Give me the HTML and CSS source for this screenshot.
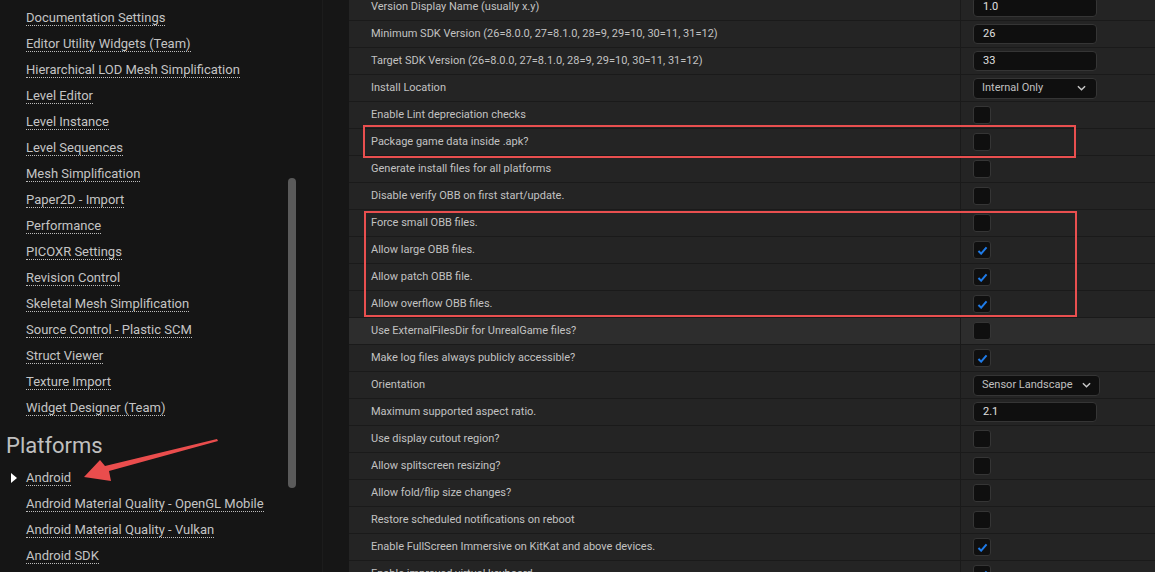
FILE: index.html
```html
<!DOCTYPE html>
<html lang="en">
<head>
    <meta charset="UTF-8">
    <title>Project Settings - Android</title>
    <link rel="stylesheet" href="styles.css">
</head>
<body>

<div class="sidebar">
    <ul class="nav">
        <li><span class="link">Documentation Settings</span></li>
        <li><span class="link">Editor Utility Widgets (Team)</span></li>
        <li><span class="link">Hierarchical LOD Mesh Simplification</span></li>
        <li><span class="link">Level Editor</span></li>
        <li><span class="link">Level Instance</span></li>
        <li><span class="link">Level Sequences</span></li>
        <li><span class="link">Mesh Simplification</span></li>
        <li><span class="link">Paper2D - Import</span></li>
        <li><span class="link">Performance</span></li>
        <li><span class="link">PICOXR Settings</span></li>
        <li><span class="link">Revision Control</span></li>
        <li><span class="link">Skeletal Mesh Simplification</span></li>
        <li><span class="link">Source Control - Plastic SCM</span></li>
        <li><span class="link">Struct Viewer</span></li>
        <li><span class="link">Texture Import</span></li>
        <li><span class="link">Widget Designer (Team)</span></li>
    </ul>
    <h2 class="section">Platforms</h2>
    <ul class="nav">
        <li class="active"><span class="caret"></span><span class="link">Android</span></li>
        <li><span class="link">Android Material Quality - OpenGL Mobile</span></li>
        <li><span class="link">Android Material Quality - Vulkan</span></li>
        <li><span class="link">Android SDK</span></li>
    </ul>
    <div class="scrollbar"></div>
</div>

<div class="gutter"></div>

<div class="panel">
    <div class="row"><div class="label">Version Display Name (usually x.y)</div><div class="value"><span class="field">1.0</span></div></div>
    <div class="row"><div class="label">Minimum SDK Version (26=8.0.0, 27=8.1.0, 28=9, 29=10, 30=11, 31=12)</div><div class="value"><span class="field">26</span></div></div>
    <div class="row"><div class="label">Target SDK Version (26=8.0.0, 27=8.1.0, 28=9, 29=10, 30=11, 31=12)</div><div class="value"><span class="field">33</span></div></div>
    <div class="row"><div class="label">Install Location</div><div class="value"><span class="combo">Internal Only<svg class="chev" viewBox="0 0 10 6"><path d="M1 1l4 4 4-4"/></svg></span></div></div>
    <div class="row"><div class="label">Enable Lint depreciation checks</div><div class="value"><span class="check"></span></div></div>
    <div class="row"><div class="label">Package game data inside .apk?</div><div class="value"><span class="check"></span></div></div>
    <div class="row"><div class="label">Generate install files for all platforms</div><div class="value"><span class="check"></span></div></div>
    <div class="row"><div class="label">Disable verify OBB on first start/update.</div><div class="value"><span class="check"></span></div></div>
    <div class="row"><div class="label">Force small OBB files.</div><div class="value"><span class="check"></span></div></div>
    <div class="row"><div class="label">Allow large OBB files.</div><div class="value"><span class="check on"><svg viewBox="0 0 12 10"><path d="M1.5 5.5l3 3 6-7"/></svg></span></div></div>
    <div class="row"><div class="label">Allow patch OBB file.</div><div class="value"><span class="check on"><svg viewBox="0 0 12 10"><path d="M1.5 5.5l3 3 6-7"/></svg></span></div></div>
    <div class="row"><div class="label">Allow overflow OBB files.</div><div class="value"><span class="check on"><svg viewBox="0 0 12 10"><path d="M1.5 5.5l3 3 6-7"/></svg></span></div></div>
    <div class="row hover"><div class="label">Use ExternalFilesDir for UnrealGame files?</div><div class="value"><span class="check"></span></div></div>
    <div class="row"><div class="label">Make log files always publicly accessible?</div><div class="value"><span class="check on"><svg viewBox="0 0 12 10"><path d="M1.5 5.5l3 3 6-7"/></svg></span></div></div>
    <div class="row"><div class="label">Orientation</div><div class="value"><span class="combo wide">Sensor Landscape<svg class="chev" viewBox="0 0 10 6"><path d="M1 1l4 4 4-4"/></svg></span></div></div>
    <div class="row"><div class="label">Maximum supported aspect ratio.</div><div class="value"><span class="field">2.1</span></div></div>
    <div class="row"><div class="label">Use display cutout region?</div><div class="value"><span class="check"></span></div></div>
    <div class="row"><div class="label">Allow splitscreen resizing?</div><div class="value"><span class="check"></span></div></div>
    <div class="row"><div class="label">Allow fold/flip size changes?</div><div class="value"><span class="check"></span></div></div>
    <div class="row"><div class="label">Restore scheduled notifications on reboot</div><div class="value"><span class="check"></span></div></div>
    <div class="row"><div class="label">Enable FullScreen Immersive on KitKat and above devices.</div><div class="value"><span class="check on"><svg viewBox="0 0 12 10"><path d="M1.5 5.5l3 3 6-7"/></svg></span></div></div>
    <div class="row"><div class="label">Enable improved virtual keyboard</div><div class="value"><span class="check on"><svg viewBox="0 0 12 10"><path d="M1.5 5.5l3 3 6-7"/></svg></span></div></div>
</div>

<!-- red annotations drawn over the screenshot -->
<div class="mark mark-apk"></div>
<div class="mark mark-obb"></div>
<svg class="arrow" width="230" height="500" viewBox="0 0 230 500">
    <polygon points="84,477 100,460 105,466 217,439 218,441 109,471 111,481"/>
</svg>

</body>
</html>
```

FILE: styles.css
```css
body {
    margin: 0;
    background: #151515;
    font-family: Roboto, "Liberation Sans", sans-serif;
    display: flex;
    height: 572px;
    overflow: hidden;
}
.sidebar {
    width: 322px;
    flex: none;
    padding-top: 5px;
    position: relative;
    box-sizing: border-box;
}
.nav {
    list-style: none;
    margin: 0;
    padding: 0;
}
.nav li {
    height: 26px;
    line-height: 26px;
    padding-left: 26px;
    position: relative;
    font-size: 13px;
    color: #c4c4c4;
    white-space: nowrap;
}
.link {
    border-bottom: 1px dotted #bdbdbd;
    line-height: 14px;
    display: inline-block;
}
.caret {
    position: absolute;
    left: 11px;
    top: 8px;
    width: 0;
    height: 0;
    border-top: 5px solid transparent;
    border-bottom: 5px solid transparent;
    border-left: 6px solid #ffffff;
}
.section {
    margin: 0;
    height: 44px;
    line-height: 50px;
    padding-left: 6px;
    font-size: 22px;
    font-weight: normal;
    color: #c0c0c0;
}
.scrollbar {
    position: absolute;
    left: 288px;
    top: 178px;
    width: 8px;
    height: 310px;
    border-radius: 4px;
    background: #5a5a5a;
}
.gutter {
    width: 26px;
    flex: none;
    background: #161616;
    border-left: 1px solid #1c1c1c;
}
.panel {
    flex: 1;
    margin-top: -6px;
    background: #1a1a1a;
}
.row {
    display: grid;
    grid-template-columns: 611px 1fr;
    height: 26px;
    background: #242424;
    border-bottom: 1px solid #1a1a1a;
    font-size: 11px;
    color: #c2c2c2;
}
.row.hover {
    background: #2d2d2d;
}
.label {
    padding-left: 22px;
    line-height: 26px;
    white-space: nowrap;
}
.value {
    border-left: 1px solid #1a1a1a;
    padding-left: 12px;
    display: flex;
    align-items: center;
}
.field, .combo {
    box-sizing: border-box;
    width: 124px;
    height: 20px;
    background: #0f0f0f;
    border: 1px solid #353535;
    border-radius: 4px;
    padding-left: 9px;
    line-height: 18px;
    color: #e0e0e0;
    font-size: 11px;
}
.combo {
    height: 21px;
    color: #c0c0c0;
    display: flex;
    align-items: center;
    justify-content: space-between;
    padding: 0 10px 0 8px;
}
.combo.wide {
    width: 127px;
    padding-right: 8px;
}
.chev {
    width: 9px;
    height: 6px;
    fill: none;
    stroke: #c8c8c8;
    stroke-width: 1.6;
}
.check {
    box-sizing: border-box;
    width: 18px;
    height: 18px;
    background: #0f0f0f;
    border: 1px solid #353535;
    border-radius: 3px;
    display: flex;
    align-items: center;
    justify-content: center;
}
.check svg {
    width: 11px;
    height: 9px;
    fill: none;
    stroke: #1f7be8;
    stroke-width: 2.2;
}
.mark {
    position: absolute;
    border: 2px solid #e94f4f;
}
.mark-apk {
    left: 363px;
    top: 125px;
    width: 709px;
    height: 29px;
}
.mark-obb {
    left: 364px;
    top: 211px;
    width: 709px;
    height: 102px;
}
.arrow {
    position: absolute;
    left: 0;
    top: 0;
}
.arrow polygon {
    fill: #ea4d4d;
}
```
